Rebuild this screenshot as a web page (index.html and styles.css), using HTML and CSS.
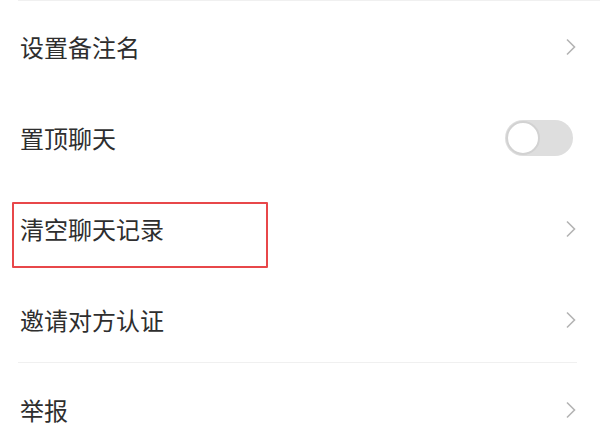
FILE: index.html
```html
<!DOCTYPE html>
<html lang="zh">
<head>
<meta charset="utf-8">
<link rel="stylesheet" href="styles.css">
</head>
<body>
<div class="list">
  <div class="row">
    <span class="label">设置备注名</span>
    <svg class="chev" viewBox="0 0 12 18" width="12" height="18"><path d="M2 1.5 L9.5 9 L2 16.5" fill="none" stroke="#b4b4b4" stroke-width="1.6"/></svg>
  </div>
  <div class="row">
    <span class="label">置顶聊天</span>
    <span class="toggle"><span class="knob"></span></span>
  </div>
  <div class="row">
    <span class="label">清空聊天记录</span>
    <svg class="chev" viewBox="0 0 12 18" width="12" height="18"><path d="M2 1.5 L9.5 9 L2 16.5" fill="none" stroke="#b4b4b4" stroke-width="1.6"/></svg>
    <span class="highlight"></span>
  </div>
  <div class="row">
    <span class="label">邀请对方认证</span>
    <svg class="chev" viewBox="0 0 12 18" width="12" height="18"><path d="M2 1.5 L9.5 9 L2 16.5" fill="none" stroke="#b4b4b4" stroke-width="1.6"/></svg>
  </div>
  <div class="divider"></div>
  <div class="row last">
    <span class="label">举报</span>
    <svg class="chev" viewBox="0 0 12 18" width="12" height="18"><path d="M2 1.5 L9.5 9 L2 16.5" fill="none" stroke="#b4b4b4" stroke-width="1.6"/></svg>
  </div>
</div>
</body>
</html>
```
FILE: styles.css
```css
html, body {
  margin: 0;
  padding: 0;
  background: #ffffff;
}
body {
  width: 600px;
  height: 426px;
  overflow: hidden;
  font-family: "Noto Sans CJK SC", "Noto Sans", sans-serif;
  color: #2e2e2e;
}
.list {
  display: flex;
  flex-direction: column;
  border-top: 1px solid #f0f0f0;
  margin-left: 18px;
}
.row {
  position: relative;
  height: 91px;
  display: flex;
  align-items: center;
  justify-content: space-between;
  padding-left: 2px;
  padding-right: 24px;
}
.row.last {
  height: 59px;
  align-items: flex-start;
  padding-top: 29px;
  box-sizing: border-box;
}
.label {
  font-size: 24px;
  line-height: 30px;
}
.chev {
  display: block;
  margin-right: -1px;
}
.row.last .chev {
  margin-top: 6px;
}
.toggle {
  width: 68px;
  height: 36px;
  border-radius: 18px;
  background: #dedede;
  display: flex;
  align-items: center;
  padding-left: 1px;
  box-sizing: border-box;
  margin-right: 3px;
}
.knob {
  width: 34px;
  height: 34px;
  border-radius: 50%;
  background: #ffffff;
  border: 2px solid #d2d2d2;
  box-sizing: border-box;
}
.highlight {
  position: absolute;
  left: -6px;
  top: 19px;
  width: 256px;
  height: 66px;
  border: 2px solid #e8474a;
  box-sizing: border-box;
  border-radius: 1px;
}
.divider {
  height: 1px;
  background: #f0f0f0;
  margin-right: 23px;
  margin-top: -3px;
  margin-bottom: 3px;
}
```
